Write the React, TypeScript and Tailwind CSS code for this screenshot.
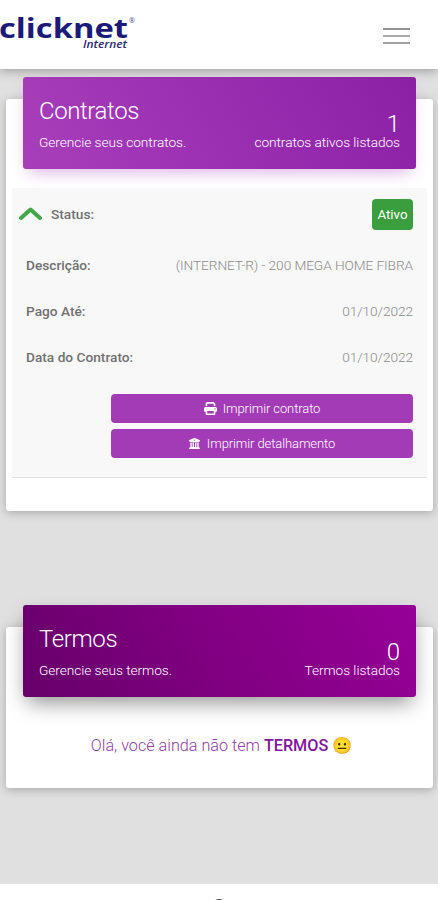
import React from 'react';
import { FaPrint, FaBuildingColumns } from 'react-icons/fa6';

interface CardHeaderProps {
  title: string;
  subtitle: string;
  count: number;
  countLabel: string;
  className: string;
}

const CardHeader: React.FC<CardHeaderProps> = ({ title, subtitle, count, countLabel, className }) => (
  <div className={`relative mx-[17px] -mt-[22px] h-[92px] rounded-[3px] px-4 flex justify-between text-white font-light ${className}`}>
    <div className="pt-[18px]">
      <h4 className="text-[24px] leading-8 tracking-[-0.4px]">{title}</h4>
      <p className="text-[13.7px] leading-5 mt-[5px] tracking-[-0.05px]">{subtitle}</p>
    </div>
    <div className="pt-[36px] text-right">
      <p className="text-[24px] leading-[22px]">{count}</p>
      <p className="text-[13.7px] leading-[14px] tracking-[-0.05px]">{countLabel}</p>
    </div>
  </div>
);

const DetailRow: React.FC<{ label: string; value: string }> = ({ label, value }) => (
  <div className="h-[46px] flex items-center justify-between text-[13.7px]">
    <span className="font-medium text-[#707070]">{label}</span>
    <span className="font-light text-[#8c8c8c] tracking-[-0.08px]">{value}</span>
  </div>
);

const Logo = () => (
  <svg width="140" height="40" viewBox="0 0 140 40" className="block" role="img">
    <text x="-1" y="25.5" textLength="129" lengthAdjust="spacingAndGlyphs" fontSize="26" fontWeight="700" fill="#1b1a78" fontFamily="Open Sans, sans-serif">clicknet</text>
    <text x="129" y="11" fontSize="7" fill="#4a4a80" fontFamily="Open Sans, sans-serif">®</text>
    <text x="83" y="36" textLength="44" lengthAdjust="spacingAndGlyphs" fontSize="11" fontWeight="600" fontStyle="italic" fill="#2b2a72" fontFamily="Open Sans, sans-serif">Internet</text>
  </svg>
);

const App = () => {
  return (
    <div className="h-[900px] overflow-hidden flex flex-col bg-[#e0e0e0] font-['Roboto',sans-serif]">
      <header className="relative shrink-0 h-[69px] bg-white shadow-[0_2px_10px_rgba(0,0,0,0.3)] flex justify-between pt-3">
        <Logo />
        <button className="mr-7 mt-4 h-4 w-[27px] flex flex-col justify-between" aria-label="Menu">
          <span className="h-[2px] w-full bg-[#929292]" />
          <span className="h-[2px] w-full bg-[#a8a8a8]" />
          <span className="h-[2px] w-full bg-[#a0a0a0]" />
        </button>
      </header>

      <main className="shrink-0 h-[815px] pt-[30px] px-[6px]">
        <section className="h-[412px] mr-[-1px] rounded-[3px] bg-white flow-root shadow-[0_2px_10px_rgba(0,0,0,0.25)]">
          <CardHeader
            title="Contratos"
            subtitle="Gerencie seus contratos."
            count={1}
            countLabel="contratos ativos listados"
            className="bg-[linear-gradient(60deg,#a83fb9,#9a2fb2_50%,#8c20a5)] shadow-[0_8px_16px_-6px_rgba(156,39,176,0.4)]"
          />
          <div className="mx-[6px] mt-[19px] h-[290px] bg-[#f8f8f8] border-b border-[#e2e2e2]">
            <div className="h-[53px] pl-[7px] pr-[14px] flex items-center justify-between">
              <div className="flex items-center gap-[9px]">
                <svg width="23" height="14" viewBox="0 0 23 14" fill="none" stroke="#43a747" strokeWidth="4" strokeLinecap="round" strokeLinejoin="round">
                  <path d="M2 11L11.5 2.5L21 11" />
                </svg>
                <span className="text-[13.7px] font-medium text-[#707070]">Status:</span>
              </div>
              <span className="h-[31px] w-[41px] rounded-[4px] bg-[#3a9e3e] text-white text-[13.3px] flex items-center justify-center">Ativo</span>
            </div>
            <div className="pt-px px-[14px]">
              <DetailRow label="Descrição:" value="(INTERNET-R) - 200 MEGA HOME FIBRA" />
              <DetailRow label="Pago Até:" value="01/10/2022" />
              <DetailRow label="Data do Contrato:" value="01/10/2022" />
            </div>
            <div className="mt-[14px] ml-[99px] mr-[14px] flex flex-col gap-[6px] text-white text-[13px] font-light tracking-[-0.1px]">
              <button className="h-[29px] rounded-[4px] bg-[#a33bb7] flex items-center justify-center gap-[6px]">
                <FaPrint className="w-[13px] h-[13px]" />
                Imprimir contrato
              </button>
              <button className="h-[29px] rounded-[4px] bg-[#a33bb7] flex items-center justify-center gap-[7px]">
                <FaBuildingColumns className="w-[11px] h-[11px]" />
                Imprimir detalhamento
              </button>
            </div>
          </div>
        </section>

        <section className="mt-[116px] h-[161px] mr-[-1px] rounded-[3px] bg-white flow-root shadow-[0_2px_10px_rgba(0,0,0,0.25)]">
          <CardHeader
            title="Termos"
            subtitle="Gerencie seus termos."
            count={0}
            countLabel="Termos listados"
            className="bg-[linear-gradient(60deg,#660069,#7f0080_45%,#960097)] shadow-[0_9px_20px_-4px_rgba(0,0,0,0.45)]"
          />
          <p className="mt-[37px] pl-[4px] text-center text-[16.2px] leading-6 font-light text-[#9040a4]">
            Olá, você ainda não tem <span className="font-medium text-[#83149b]">TERMOS</span> 😐
          </p>
        </section>
      </main>

      <footer className="grow bg-white text-center text-[20px] leading-6 pt-[11px] overflow-hidden text-[#555]">©</footer>
    </div>
  );
};

export default App;
